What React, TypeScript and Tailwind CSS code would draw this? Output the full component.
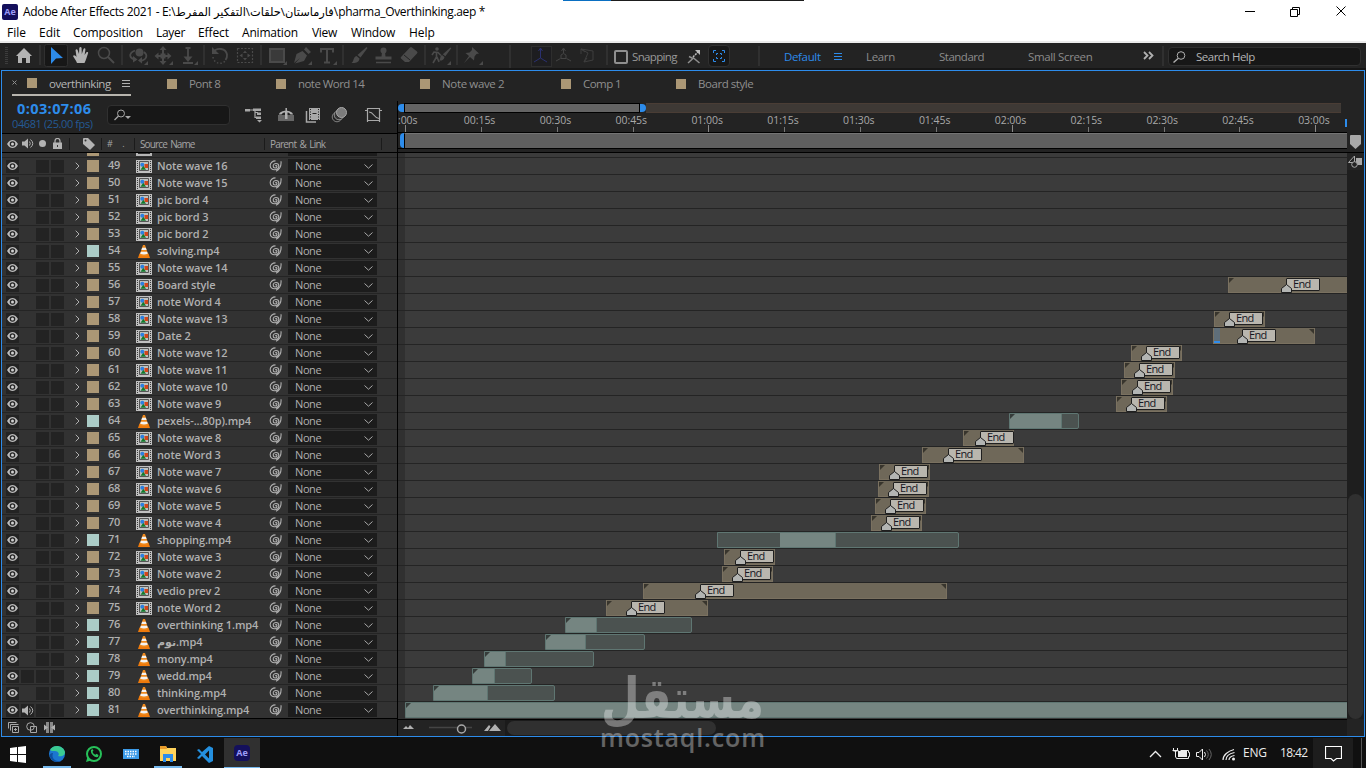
import type { ReactNode } from 'react'

type Kind = 'comp' | 'video'

interface Layer {
  n: number
  name: string
  kind: Kind
  bar?: { start: number; end: number; from?: number; to?: number; marker?: number; cache?: boolean }
  audio?: 'on' | 'off'
}

// bar positions are in panel pixels, as the ruler draws them
const LAYERS: Layer[] = [
  { n: 49, name: 'Note wave 16', kind: 'comp' },
  { n: 50, name: 'Note wave 15', kind: 'comp' },
  { n: 51, name: 'pic bord 4', kind: 'comp' },
  { n: 52, name: 'pic bord 3', kind: 'comp' },
  { n: 53, name: 'pic bord 2', kind: 'comp' },
  { n: 54, name: 'solving.mp4', kind: 'video' },
  { n: 55, name: 'Note wave 14', kind: 'comp' },
  { n: 56, name: 'Board style', kind: 'comp', bar: { start: 1228, end: 1360, marker: 1286 } },
  { n: 57, name: 'note Word 4', kind: 'comp' },
  { n: 58, name: 'Note wave 13', kind: 'comp', bar: { start: 1214, end: 1265, marker: 1229 } },
  { n: 59, name: 'Date 2', kind: 'comp', bar: { start: 1213, end: 1315, marker: 1242, cache: true } },
  { n: 60, name: 'Note wave 12', kind: 'comp', bar: { start: 1131, end: 1182, marker: 1146 } },
  { n: 61, name: 'Note wave 11', kind: 'comp', bar: { start: 1124, end: 1175, marker: 1139 } },
  { n: 62, name: 'Note wave 10', kind: 'comp', bar: { start: 1121, end: 1173, marker: 1137 } },
  { n: 63, name: 'Note wave 9', kind: 'comp', bar: { start: 1116, end: 1167, marker: 1131 } },
  { n: 64, name: 'pexels-...80p).mp4', kind: 'video', bar: { start: 1009, end: 1079, from: 1009, to: 1062 } },
  { n: 65, name: 'Note wave 8', kind: 'comp', bar: { start: 963, end: 1014, marker: 980 } },
  { n: 66, name: 'note Word 3', kind: 'comp', bar: { start: 922, end: 1024, marker: 948 } },
  { n: 67, name: 'Note wave 7', kind: 'comp', bar: { start: 879, end: 930, marker: 894 } },
  { n: 68, name: 'Note wave 6', kind: 'comp', bar: { start: 878, end: 929, marker: 893 } },
  { n: 69, name: 'Note wave 5', kind: 'comp', bar: { start: 875, end: 926, marker: 890 } },
  { n: 70, name: 'Note wave 4', kind: 'comp', bar: { start: 871, end: 922, marker: 886 } },
  { n: 71, name: 'shopping.mp4', kind: 'video', bar: { start: 717, end: 959, from: 779, to: 836 } },
  { n: 72, name: 'Note wave 3', kind: 'comp', bar: { start: 724, end: 775, marker: 740 } },
  { n: 73, name: 'Note wave 2', kind: 'comp', bar: { start: 722, end: 773, marker: 737 } },
  { n: 74, name: 'vedio prev 2', kind: 'comp', bar: { start: 643, end: 947, marker: 700 } },
  { n: 75, name: 'note Word 2', kind: 'comp', bar: { start: 606, end: 708, marker: 631 } },
  { n: 76, name: 'overthinking 1.mp4', kind: 'video', bar: { start: 565, end: 692, from: 565, to: 597 } },
  { n: 77, name: 'نوم.mp4', kind: 'video', bar: { start: 545, end: 645, from: 545, to: 586 } },
  { n: 78, name: 'mony.mp4', kind: 'video', bar: { start: 484, end: 594, from: 484, to: 506 } },
  { n: 79, name: 'wedd.mp4', kind: 'video', audio: 'off', bar: { start: 472, end: 532, from: 472, to: 495 } },
  { n: 80, name: 'thinking.mp4', kind: 'video', bar: { start: 433, end: 555, from: 433, to: 488 } },
  { n: 81, name: 'overthinking.mp4', kind: 'video', audio: 'on', bar: { start: 405, end: 1360, from: 405, to: 1360 } },
]

const TIMES = ['0:00s', '00:15s', '00:30s', '00:45s', '01:00s', '01:15s', '01:30s', '01:45s', '02:00s', '02:15s', '02:30s', '02:45s', '03:00s']
const TICK_GAP = 75.85
const TRACK_LEFT = 398

function Svg({ w, h, className = '', children }: { w: number; h: number; className?: string; children: ReactNode }) {
  return (
    <svg width={w} height={h} viewBox={`0 0 ${w} ${h}`} fill="none" className={`block shrink-0 ${className}`}>
      {children}
    </svg>
  )
}

function Eye() {
  return (
    <Svg w={11} h={8}>
      <path d="M0 4C2 .9 3.800 0 5.500 0S9 .9 11 4C9 7.100 7.200 8 5.500 8S2 7.100 0 4Z" fill="#bcbcbc" />
      <circle cx="5.500" cy="4" r="2.800" fill="#262626" />
      <circle cx="5.500" cy="4" r="1.500" fill="#d0d0d0" />
    </Svg>
  )
}

function Speaker() {
  return (
    <Svg w={12} h={11}>
      <path d="M0 3.500h2.500L6 .5v10L2.500 7.500H0z" fill="#b4b4b4" />
      <path d="M7.500 3.500q1.500 2 0 4M8.500 1.500q4.500 4 0 8" stroke="#b4b4b4" />
    </Svg>
  )
}

function Spiral() {
  return (
    <Svg w={13} h={12}>
      <path
        d="M6.300 6.200c.2-1.200 1.700-.8 1.600.4-.2 2-3.700 2.100-3.700-.6 0-3.300 5.600-3.400 5.600.2 0 4.800-8.300 4.900-8.600-.4C1 2.800 3.600 .9 6.500 .9M12 1.200c.4 4-.8 8-5 10"
        stroke="#b0b0b0"
        strokeWidth="1.100"
      />
    </Svg>
  )
}

function CompIcon() {
  return (
    <Svg w={16} h={13}>
      <path d="M0 0h16v13H0z" fill="#c0c0c0" />
      <path d="M1.500 1v12M14.500 1v12" stroke="#3a3a3a" strokeDasharray="1 1" />
      <path d="M3.500 1.500h9v9h-9z" stroke="#555" fill="#bcc0be" />
      <circle cx="6.300" cy="4.700" r="2" fill="#2d7fe0" />
      <path d="M8.500 4h3.500v4H8.500z" fill="#d2451b" />
      <path d="M4.500 9.700 7.300 5.700 10 9.700z" fill="#137a2c" />
    </Svg>
  )
}

function Cone() {
  return (
    <Svg w={12} h={13}>
      <path d="M1.500 8.500h9L12 13H0z" fill="#ee7a0c" />
      <path d="M5 0h2l3.300 10q-4.300 2-8.600 0z" fill="#f08a1d" />
      <path d="M4.100 2.800h3.800l.7 2.200H3.400zM2.800 6.800h6.400l.6 2q-3.800 1.200-7.600 0z" fill="#f2f2f2" />
    </Svg>
  )
}

function Chevron() {
  return (
    <Svg w={9} h={5}>
      <path d="m.5.5 4 3.700L8.500.5" stroke="#a8a8a8" />
    </Svg>
  )
}

function Cell({ dark, children }: { dark?: boolean; children?: ReactNode }) {
  return <div className={`mr-0.5 flex h-[13px] w-[13px] items-center justify-center ${dark ? 'bg-[#232323]' : ''}`}>{children}</div>
}

function LayerRow({ layer }: { layer: Layer }) {
  return (
    <div className="flex h-[17px] shrink-0 items-center border-t border-[#242424] bg-[#323232] pl-1 text-[11px] leading-none text-[#b0b0b0]">
      <Cell dark><Eye /></Cell>
      <Cell dark={!!layer.audio}>{layer.audio === 'on' && <Speaker />}</Cell>
      <Cell dark />
      <Cell dark />
      <div className="flex w-[21px] justify-center pl-px">
        <Svg w={5} h={8}>
          <path d="m.7.700 3.300 3.300-3.300 3.300" stroke="#b0b0b0" />
        </Svg>
      </div>
      <div className={`h-3 w-3 ${layer.kind === 'comp' ? 'bg-[#ab9775]' : 'bg-[#abccc7]'}`} />
      <span className="w-[37px] pb-[3px] pl-[9px] font-semibold tracking-[-0.2px]">{layer.n}</span>
      <div className="flex w-4 justify-center">{layer.kind === 'comp' ? <CompIcon /> : <Cone />}</div>
      <span className="w-[117px] whitespace-nowrap pb-0.5 pl-[5px] font-semibold tracking-[-0.12px]">{layer.name}</span>
      <Spiral />
      <div className="ml-[6px] flex h-[14px] w-[89px] items-center justify-between bg-[#1c1c1c] pl-[7px] pr-1">
        <span className="pb-0.5 font-medium tracking-[-0.4px]">None</span>
        <Chevron />
      </div>
    </div>
  )
}

function Marker({ at }: { at: number }) {
  return (
    <div className="absolute -left-px top-0 h-4">
      <span
        className="absolute top-px flex h-[13px] w-[34px] items-center rounded-[1px] border border-[#1f1f1f] bg-[#b9b6ae] pb-0.5 pl-1.5 text-[11px] leading-none tracking-[-0.7px] text-[#15151f]"
        style={{ left: at }}
      >
        End
      </span>
      <div className="absolute bottom-0" style={{ left: at - 5 }}>
        <Svg w={11} h={9}>
          <path d="M.5 8.500v-4l5-4 5 4v4z" fill="#b3b5b3" stroke="#1f1f1f" />
        </Svg>
      </div>
    </div>
  )
}

function Track({ layer }: { layer: Layer }) {
  const { bar } = layer
  return (
    <div className="relative flex h-[17px] shrink-0 border-t border-[#242424]">
      {bar && layer.kind === 'comp' && (
        <div
          className="relative h-4 shrink-0 border-x border-b border-[#7a7160] bg-[#6f6859]"
          style={{ marginLeft: bar.start - TRACK_LEFT, width: bar.end - bar.start }}
        >
          <i className="absolute left-0 top-px size-[5px] bg-[#38352d] [clip-path:polygon(0_0,100%_0,0_100%)]" />
          <i className="absolute right-0 top-px size-[5px] bg-[#38352d] [clip-path:polygon(0_0,100%_0,100%_100%)]" />
          {bar.cache && <i className="absolute bottom-0 left-0 h-[15px] w-1.5 border-b-2 border-[#2f8ded] bg-[#5f6e79]" />}
          {bar.marker && <Marker at={bar.marker - bar.start} />}
        </div>
      )}
      {bar && layer.kind === 'video' && (
        <div
          className="relative flex h-4 shrink-0 rounded-r-xs border border-[#5f7672] bg-[#4b5250]"
          style={{ marginLeft: bar.start - TRACK_LEFT, width: bar.end - bar.start }}
        >
          <div
            className="h-[14px] border-r border-[#5f7672] bg-[#758581]"
            style={{ marginLeft: (bar.from ?? 0) - bar.start, width: (bar.to ?? 0) - (bar.from ?? 0) - 1 }}
          />
          {bar.from === bar.start && (
            <i className="absolute left-0 top-0 size-[5px] bg-[#363c3a] [clip-path:polygon(0_0,100%_0,0_100%)]" />
          )}
        </div>
      )}
    </div>
  )
}

function Sep({ className = '' }: { className?: string }) {
  return <div className={`h-5 w-0.5 shrink-0 bg-[#303030] ${className}`} />
}

function Tools() {
  return (
    <Svg w={610} h={25}>
      <path d="M6.500 4v18" stroke="#3c3c3c" strokeWidth="3" strokeDasharray="1 1" />
      <path d="m16 13 8-8 8 8h-2v7h-4v-5h-4v5h-4v-7z" fill="#b3b3b3" />
      <path d="M40 2v20M122 2v20M204 2v20M261 2v20M343 2v20M425 2v20M457 2v20M607 2v20" stroke="#303030" strokeWidth="2" />
      <path d="M510 2v23" stroke="#303030" strokeWidth="2" />
      <rect x="44.500" y="1.500" width="23" height="22" rx="2" fill="#171717" stroke="#303030" />
      <path d="m51 4 12 11-7 .5L51 21z" fill="#2d8ceb" />
      <path d="M77 20c-1-3-3-5-4-7 1-1.500 2.500-.5 3.500 1L75.500 7c1-1.500 2-.8 2.300.5L79 11l.3-6c.5-1.500 2-1.500 2.300 0l.2 6 1.700-5c.8-1.200 2-.7 1.900.7L84.600 12l1.700-2.500c1-1 2.300-.2 1.700 1-1 2.500-2 7-3.500 9.500z" fill="#b3b3b3" />
      <circle cx="104" cy="10" r="5.500" stroke="#4a4a4a" strokeWidth="1.500" />
      <path d="m108 14 6 6" stroke="#4a4a4a" strokeWidth="2" />
      {/* orbit, pan and dolly cameras */}
      <circle cx="139.500" cy="9.500" r="4" fill="#4a4a4a" />
      <path d="M135 7.500c-7 3-6 8 1 9M144 9c4 3 3 8-4 9" stroke="#4a4a4a" strokeWidth="1.800" />
      <path d="m133 13 4.500 3.500-4.500 3zM142 14l-4 3.500 4 3z" fill="#4a4a4a" />
      <path d="M163 6v14M156 13h14" stroke="#4a4a4a" strokeWidth="2" />
      <path d="m163 3 3.500 4h-7zM163 22l3.500-4h-7zM154.500 13l4-3.500v7zM171.500 13l-4-3.500v7zM160.500 10.500h5v5h-5z" fill="#4a4a4a" />
      <path d="M188 4v12M183 20h10M185.500 5h5" stroke="#4a4a4a" strokeWidth="1.800" />
      <path d="m183.500 13.500 4.500 5.500 4.500-5.500z" fill="#4a4a4a" />
      <path d="M213 9.500c4-6 13-4 14 2 .2 2-.3 4-1.500 5.500" stroke="#4a4a4a" strokeWidth="1.800" />
      <path d="M212 4v7h7z" fill="#4a4a4a" />
      <path d="M213 14c1 7 9 8 12 4" stroke="#4a4a4a" strokeWidth="1.500" strokeDasharray="1.500 2" />
      <rect x="237.500" y="5.500" width="15" height="14" stroke="#4a4a4a" strokeDasharray="2 1.500" strokeWidth="1.200" />
      <path d="m245 7.500 2 2.500h-4zM245 17.500l2-2.500h-4zM239.500 12.500l3-2v4zM250.500 12.500l-3-2v4z" fill="#4a4a4a" />
      <path d="M270 6h14v13h-14z" fill="#3a3a3a" stroke="#4a4a4a" strokeWidth="2" />
      <path d="m294 20 2.500-9 6-3 4.500 4.500-3 5.500-9 2.500 5-5.500zM304 6.500l2-2.500 5 5-2.500 2z" fill="#4a4a4a" />
      <path d="M321 9.500V6h12v3.500M327 6v13M324 19.500h6" stroke="#4a4a4a" strokeWidth="2" />
      <path
        d="M148 22v-4l-4 4zM173 22v-4l-4 4zM198 22v-4l-4 4zM287 22v-4l-4 4zM312 22v-4l-4 4zM337 22v-4l-4 4zM451 22v-4l-4 4zM483 22v-4l-4 4z"
        fill="#4a4a4a"
      />
      {/* paint tools */}
      <path d="m366.500 4 1 1-7 9.500-3-2.500zM356.500 13l3 2.500c-.5 4-4 5-8 4.500 2.500-1.500 1.500-6 5-7z" fill="#4a4a4a" />
      <circle cx="383.500" cy="7.500" r="3" fill="#4a4a4a" />
      <path d="M382 9h3l.5 4.500h6v3h-16v-3h6z" fill="#4a4a4a" />
      <path d="M376 19.500h15" stroke="#4a4a4a" strokeWidth="1.500" />
      <path d="m401 14 9-9.500q1-1 2 0l5 4q1 1 0 2l-8 8.500h-4l-4-3.500q-.8-.8 0-1.500z" fill="#4a4a4a" />
      <path d="m404 12 6 5" stroke="#232323" />
      <circle cx="437" cy="6" r="1.800" fill="#4a4a4a" />
      <path d="m432 12 2-3 4 .5 3 3M436.500 9v5l-3.500 6M437 14l2 5" stroke="#4a4a4a" strokeWidth="1.600" />
      <path d="m450.500 4.500.8.800-6 8-2.500-2zM442 12l2.500 2c-.5 3-3 4-5.500 3.500 2-1.500.5-4.500 3-5.500z" fill="#4a4a4a" />
      <path d="m472 4 7 6.500-2.500.5-2 2.500-.5 4-4-3.500-6 6 5-7-3.500-3 4-.5 2.500-2.500z" fill="#4a4a4a" />
      {/* axis modes */}
      <rect x="531.500" y="3.500" width="20" height="20" fill="#1d1d20" stroke="#2e2e2e" />
      <path d="M540.500 5v10l-6.500 4M540.500 15l6.500 4M538.500 8l2-3 2 3" stroke="#2a3070" />
      <path d="M563.500 6v4M556 18l4.500-2.500M571 18l-4.500-2.500M561.500 8l2-3 2 3M561 12l2.500-1.500L566 12v3.500h-5z" stroke="#444" />
      <path d="m581 6 12 2v9l-9 2 4-9zM581 6v5M581 6l4 3M584 19l3-4" stroke="#3e3e3e" />
    </Svg>
  )
}

function Toolbar() {
  return (
    <div className="flex h-[25px] shrink-0 items-center bg-[#232323] text-[11.5px] tracking-[-0.35px] text-[#8c8c8c]">
      <Tools />
      <div className="ml-1 mt-0.5 size-3.5 rounded-[2px] border-2 border-[#8f8f8f]" />
      <span className="ml-1 mt-[3px] w-[46px] whitespace-nowrap tracking-[-0.65px] text-[#999]">Snapping</span>
      <Svg w={16} h={16} className="ml-2 mt-0.5">
        <path d="m2 14 5.500-5 6 5M3 7.500l4 2" stroke="#8f8f8f" strokeWidth="1.500" />
        <path d="m7 8 5-5" stroke="#bcbcbc" strokeWidth="1.500" strokeDasharray="2 1" />
        <path d="M9 1h5v5z" fill="#bcbcbc" />
      </Svg>
      <div className="ml-1.5 flex h-[22px] w-[22px] items-center justify-center rounded-sm border border-[#303030] bg-[#171717]">
        <Svg w={14} h={14}>
          <path
            d="M1.500 4V1.500H4M10 1.500h2.500V4M1.500 10v2.500H4M10 12.500h2.500V10M4.500 6V4.500H6M8 4.500h1.500V6M4.500 8v1.500H6M8 9.500h1.500V8"
            stroke="#2d8ceb"
          />
        </Svg>
      </div>
      <Sep className="ml-[28px]" />
      <span className="ml-6 mt-[3px] w-[50px] text-[#2d8ceb]">Default</span>
      <div className="mt-0.5 flex w-8 flex-col gap-[2px]">
        <i className="h-px w-2 bg-[#2d8ceb]" />
        <i className="h-px w-2 bg-[#2d8ceb]" />
        <i className="h-px w-2 bg-[#2d8ceb]" />
      </div>
      <span className="mt-[3px] w-[73px]">Learn</span>
      <span className="mt-[3px] w-[89px] tracking-[-0.5px]">Standard</span>
      <span className="mt-[3px] w-[115px]">Small Screen</span>
      <Svg w={11} h={9}>
        <path d="m1 1 3.500 3.500L1 8M6 1l3.500 3.500L6 8" stroke="#b0b0b0" strokeWidth="1.800" />
      </Svg>
      <Sep className="ml-2" />
      <div className="ml-1 mt-0.5 flex h-[19px] w-[193px] items-center rounded-sm border border-[#303030] bg-[#171717] pl-1">
        <Svg w={13} h={12}>
          <circle cx="8" cy="4.500" r="3.800" stroke="#b0b0b0" />
          <path d="m5 7.500-4.500 4" stroke="#b0b0b0" strokeWidth="1.400" />
        </Svg>
        <span className="pl-[10px] tracking-[-0.5px] text-[#b5b5b5]">Search Help</span>
      </div>
    </div>
  )
}

function Tab({ label, width }: { label: string; width: string }) {
  return (
    <div className={`flex h-full items-center pb-1 ${width}`}>
      <i className="mr-3 size-2.5 bg-[#ab9775]" />
      <span className="whitespace-nowrap">{label}</span>
    </div>
  )
}

function HeadRule() {
  return <i className="h-3 w-px bg-[#1b1b1b]" />
}

function LayerPanel() {
  return (
    <div className="flex w-[395px] shrink-0 flex-col">
      <div className="flex h-[33px] shrink-0 items-start border-b border-black">
        <div className="flex w-[105px] flex-col">
          <span className="pl-[15px] text-[14.5px] font-bold leading-[15px] tracking-[0.4px] text-[#2d8ceb]">0:03:07:06</span>
          <span className="whitespace-nowrap pl-2.5 text-[11px] leading-[15px] tracking-[-0.4px] text-[#245a94]">04681 (25.00 fps)</span>
        </div>
        <div className="mt-1 flex h-5 w-[123px] items-center rounded-sm border border-[#303030] bg-[#171717] pl-1.5">
          <Svg w={18} h={12}>
            <circle cx="7" cy="4.500" r="3.500" stroke="#a8a8a8" />
            <path d="m4.500 7-4 4" stroke="#a8a8a8" strokeWidth="1.300" />
            <path d="M11 7h6l-3 3z" fill="#a8a8a8" />
          </Svg>
        </div>
        <Svg w={165} h={30} className="-mt-px">
          <path d="M18 10h7M25 10v7.500h3M25 12.500h3" stroke="#a8a8a8" strokeWidth="1.200" />
          <path d="M15 9h5v2.500h-5zM23 8.500h8V11h-8zM27 12.500h4V15h-4zM26 16.500h5V19h-5zM27 20h5l-2.500 2.500z" fill="#a8a8a8" />
          <path d="M48 15h16v6H48z" fill="#666" />
          <path d="M49 14.500c1-5 13-5 14 0h-2.500c-1-1.500-2-2-3-2V19h-2.500v-6.500c-1.500 0-2.500.5-3.500 2z" fill="#b0b0b0" />
          <path d="M56.200 8v4" stroke="#b0b0b0" strokeWidth="1.500" />
          <path d="M76.500 11v11H86" stroke="#a8a8a8" strokeWidth="1.500" />
          <path d="M79 8h11v12H79z" fill="#a8a8a8" />
          <path d="M80.500 9v11M88.500 9v11" stroke="#232323" strokeDasharray="1 1.500" />
          <path d="M82.500 13.500h4" stroke="#232323" />
          <circle cx="107" cy="17" r="4.800" stroke="#808080" />
          <circle cx="109" cy="15" r="4.800" fill="#333" stroke="#909090" />
          <circle cx="111.500" cy="12.500" r="5" fill="#7c7c7c" stroke="#a8a8a8" />
          <path d="M137.500 8.500h12v12h-12zM135 10.500h2M150 10.500h2M139 12c5 0 5 6.500 10 6.500M137.500 20v2M149.500 20v2" stroke="#a8a8a8" strokeWidth="1.200" />
        </Svg>
      </div>
      <div className="flex h-[19px] shrink-0 items-center border-b border-black bg-[#303030] pl-[5px] pt-px text-[10.5px] tracking-[-0.6px] text-[#a5a5a5]">
        <div className="flex w-[62px] items-center gap-1">
          <Eye />
          <Speaker />
          <i className="mx-px size-[7px] rounded-full bg-[#b4b4b4]" />
          <Svg w={9} h={11} className="ml-0.5">
            <path d="M2 5V3q0-2.500 2.500-2.500T7 3v2" stroke="#b4b4b4" strokeWidth="1.200" />
            <path d="M0 4.500h9V11H0z" fill="#b4b4b4" />
            <path d="M4 7h1v2H4z" fill="#333" />
          </Svg>
        </div>
        <HeadRule />
        <Svg w={12} h={12} className="ml-[13px] mr-[6px]">
          <path d="M0 1q0-1 1-1h4l7 7-5 5-7-6z" fill="#b4b4b4" />
          <circle cx="2.500" cy="2.500" r="1" fill="#333" />
        </Svg>
        <HeadRule />
        <span className="ml-[5px] flex w-[27px] gap-2.5 text-[9px]">
          <span>#</span>
          <span>.</span>
        </span>
        <HeadRule />
        <span className="ml-[5px] w-[124px] pt-px text-[10px] tracking-[-0.87px] [word-spacing:1.500px]">Source Name</span>
        <HeadRule />
        <span className="ml-[5px] w-[111px] pt-px text-[10px] tracking-[-0.8px] [word-spacing:1.500px]">Parent &amp; Link</span>
        <HeadRule />
      </div>
      <div className="flex h-1 shrink-0 items-start bg-[#323232] pl-[85px]">
        <i className="h-[3px] w-3 bg-[#ab9775]" />
        <i className="ml-[37px] h-[3px] w-4 border-x-2 border-b-2 border-[#b5b5b5]" />
        <i className="ml-[136px] h-[3px] w-[89px] bg-[#1c1c1c]" />
      </div>
      {LAYERS.map((l) => (
        <LayerRow key={l.n} layer={l} />
      ))}
      <div className="flex flex-1 items-center border-t border-black">
        <Svg w={60} h={16}>
          <g stroke="#a8a8a8">
            <path d="M6.500 8.500v-6h8M8.500 10.500v-6h8" />
            <path d="M10.500 6.500h6v6h-6zM13.500 8v3M12 9.500h3" />
            <circle cx="28.500" cy="6.500" r="3.800" />
            <path d="M28.500 6.500h6v6h-6z" />
          </g>
          <path d="M44 2h3v11h-3zM48 2h3v11h-3z" fill="#8a8a8a" />
          <path d="m42 4.500 4 3-4 3zM53 4.500l-4 3 4 3z" fill="#b0b0b0" />
        </Svg>
      </div>
    </div>
  )
}

function TimelineHead() {
  return (
    <>
      <div className="flex h-[13px] shrink-0 items-start pt-0.5">
        <i className="mt-px h-2 w-1.5 rounded-l-full bg-[#2d8ceb]" />
        <i className="h-[10px] w-[236px] border border-black bg-[#646464]" />
        <i className="mt-px h-2 w-1.5 rounded-r-full bg-[#2d8ceb]" />
        <i className="h-[10px] w-[695px] border-y border-[#4a3d35] bg-[#3e3935]" />
      </div>
      <div className="relative flex h-[19px] shrink-0 border-b border-black text-[10.5px] tracking-[-0.05px] text-[#a8a8a8]">
        <div className="-ml-[10px] -mt-px flex">
          {TIMES.map((t, i) => (
            <div key={t} className={`w-[75.85px] shrink-0 leading-[15px] ${i === 0 ? 'pl-[4px]' : ''}`}>
              {t}
            </div>
          ))}
        </div>
        {TIMES.map((t, i) => (
          <i
            key={t}
            className={`absolute bottom-0 w-px ${i % 4 === 0 ? 'h-[7px] bg-[#8a8a8a]' : 'h-[5px] bg-[#777]'}`}
            style={{ left: 7 + i * TICK_GAP }}
          />
        ))}
        <i className="absolute bottom-[5px] right-0 h-2 w-0.5 bg-[#2d8ceb]" />
      </div>
      <div className="flex h-4 shrink-0 border-b border-black">
        <i className="ml-0.5 h-[15px] w-1 rounded-l-sm bg-[#2d8ceb]" />
        <i className="h-[15px] flex-1 border-l border-t border-l-black border-t-[#747474] bg-[#5f5f5f]" />
      </div>
      <div className="h-1 shrink-0 border-b border-black" />
    </>
  )
}

function Timeline() {
  return (
    <div className="flex w-[949px] shrink-0 flex-col overflow-hidden">
      <TimelineHead />
      <div className="flex h-[566px] flex-col bg-linear-to-r from-[#303030] from-[7px] to-[#3b3b3b] to-[7px]">
        <div className="h-1 shrink-0" />
        {LAYERS.map((l) => (
          <Track key={l.n} layer={l} />
        ))}
      </div>
      <div className="flex h-[17px] items-center border-t border-black bg-[#1b1b1b]">
        <Svg w={107} h={16} className="bg-[#232323]">
          <path d="m5 9 3-3 2 2 2-3 4 4z" fill="#b0b0b0" />
          <path d="M31 7.500h43" stroke="#444" strokeWidth="1.500" />
          <circle cx="63.500" cy="9" r="4" fill="#232323" stroke="#a8a8a8" strokeWidth="1.500" />
          <path d="m86 11 5-6 1.500 1.500L90 11zM91 11l6-7 6 7z" fill="#b0b0b0" />
        </Svg>
        <i className="ml-0.5 h-[14px] w-[209px] rounded-full bg-[#303030]" />
      </div>
    </div>
  )
}

function RulerSide() {
  return (
    <div className="flex w-[17px] shrink-0 flex-col">
      <div className="flex h-[52px] items-end justify-center border-b border-black pb-[3px]">
        <Svg w={11} h={14}>
          <path d="M0 1q0-1 1-1h9q1 0 1 1v8l-5.500 5L0 9z" fill="#a8a8a8" />
        </Svg>
      </div>
      <Svg w={17} h={17}>
        <path d="M9 5h6v7H9z" fill="#a8a8a8" />
        <path d="M1.500 9.500 7.500 3v6.500z" stroke="#a8a8a8" />
        <circle cx="7.500" cy="11.500" r="2.800" fill="#232323" stroke="#a8a8a8" />
      </Svg>
      <div className="flex flex-1 flex-col justify-end bg-[#1e1e1e]">
        <i className="mx-px h-[225px] rounded-full bg-[#303030]" />
      </div>
      <div className="h-[17px]" />
    </div>
  )
}

function Taskbar() {
  return (
    <div className="flex h-[31px] shrink-0 items-center bg-[#101010] text-[12px] text-[#ececec]">
      <Svg w={224} h={31}>
        <path d="m10 10 7-1v7h-7zM18 9l8-1v8h-8zM10 17h7v7l-7-1zM18 17h8v8l-8-1z" fill="#fff" />
        <circle cx="57" cy="16" r="8" fill="#1b76d0" />
        <path d="M50 12c3-6 13-5 15 2 0 4-4 5-7 4 2-2 0-5-3-5-3 0-4 0-5-1z" fill="#3bcb92" />
        <path d="M53 15c-2 5 2 9 8 8-3 2-9 1-11-4-1-3 1-4 3-4z" fill="#0e4f9f" />
        <path d="M43 28h28v3H43zM154 28h28v3h-28z" fill="#76b9ed" />
        <circle cx="94" cy="16" r="7" stroke="#27c15a" strokeWidth="2" />
        <path d="m86 24 1.500-5 3.500 3.500z" fill="#27c15a" />
        <path d="M91 12c-1 3 3 8 7 7l.5-2-2-1.200-1 1c-1.500-.5-2.500-1.500-3-3l1-1-1-1.800z" fill="#27c15a" />
        <path d="M123 11h16v10h-16z" fill="#3c9be8" />
        <path d="M125 13.500h12M125 16h12M127 18.500h8" stroke="#fff" strokeWidth="1.300" strokeDasharray="1.500 1" />
        <path d="M160 8h6l1 2h9v13h-16z" fill="#ffd35c" />
        <path d="M160 8h6l1 3h-7z" fill="#e89b2b" />
        <path d="M163 16h10v8h-3v-4h-4v4h-3z" fill="#2d8ceb" />
        <path
          d="m209 8 4 2v13l-4 2-7-7-3 3-2-1 4-4-4-4 2-1 3 3zM209 12.500 205 16.500l4 4z"
          fill="#2490df"
          fillRule="evenodd"
        />
      </Svg>
      <div className="flex h-full w-9 items-center justify-center border-b-2 border-[#76b9ed] bg-[#303030]">
        <span className="flex size-4 items-center justify-center rounded-sm bg-[#14105c] text-[9px] font-bold text-[#9c9cf8]">Ae</span>
      </div>
      <div className="flex-1" />
      <Svg w={98} h={31}>
        <path d="m6 19 5.500-5.500L17 19" stroke="#eee" strokeWidth="1.300" />
        <path d="M34 13h9v6h-9z" fill="#eee" />
        <path d="M32.500 19.500v1h12v-2h1v-4h-1v-2h-8M29.500 10v3h4v-3M28.500 12.500h6M31.500 13v6.500" stroke="#eee" />
        <path d="M52.500 14.500H55l3.500-3.500v11L55 18.500h-2.500z" stroke="#eee" />
        <path d="M60.500 14q2 2.500 0 5" stroke="#eee" />
        <path d="M62.500 12.500q3.500 4 0 8M65 11q4.500 5.500 0 11" stroke="#666" />
        <path d="M79 22c0-5 5-9 11-10.500M82 22c0-4 4-6.500 8.500-7.500M85 22c0-2.500 3-4 5.500-4.500" stroke="#eee" strokeWidth="1.200" />
        <circle cx="89.500" cy="21" r="1.500" fill="#eee" />
      </Svg>
      <span className="w-[38px] pb-0.5 pl-px tracking-[-0.2px]">ENG</span>
      <span className="w-8 whitespace-nowrap pb-0.5 tracking-[-0.65px]">18:42</span>
      <div className="flex h-full w-10 items-center justify-center bg-[#1d1d1d] ml-px">
        <Svg w={17} h={17}>
          <path d="M.5 1.500h16v12h-5L8.500 16 6 13.500H.5z" stroke="#fff" strokeWidth="1.200" />
        </Svg>
      </div>
      <div className="ml-2 mr-1 h-full w-px bg-[#555]" />
    </div>
  )
}

function MenuBar() {
  return (
    <div className="flex h-[43px] shrink-0 flex-col border-b-2 border-[#ebebeb] bg-white text-[12px] text-black">
      <div className="flex h-[23px] items-center pl-0.5">
        <span className="flex size-4 items-center justify-center rounded-xs bg-[#14105c] text-[9px] font-bold text-[#9c9cf8]">Ae</span>
        <span className="flex-1 whitespace-nowrap pl-[5px] pt-px tracking-[-0.33px]">
          Adobe After Effects 2021 - E:\
          <span className="text-[11.4px] tracking-normal">فارماستان\حلقات\التفكير المفرط</span>
          \pharma_Overthinking.aep *
        </span>
        <Svg w={121} h={21}>
          <path d="M0 10.500h10M45.500 8.500h7v7h-7zM47.500 8.500v-2h7v7h-2M91.500 5.500l9 9M100.500 5.500l-9 9" stroke="#000" />
        </Svg>
      </div>
      <div className="flex h-[18px] items-center pl-[7px] pt-0.5">
        <span className="w-8">File</span>
        <span className="w-[34px]">Edit</span>
        <span className="w-[83px] tracking-[-0.1px]">Composition</span>
        <span className="w-[42px] tracking-[-0.3px]">Layer</span>
        <span className="w-11 tracking-[-0.1px]">Effect</span>
        <span className="w-[70px] tracking-[-0.2px]">Animation</span>
        <span className="w-[39px] tracking-[-0.3px]">View</span>
        <span className="w-[58px] tracking-[-0.2px]">Window</span>
        <span>Help</span>
      </div>
    </div>
  )
}

export default function App() {
  return (
    <div className="relative flex h-[768px] w-[1366px] flex-col overflow-hidden bg-[#161616] font-['Open_Sans','DejaVu_Sans',sans-serif]">
      <MenuBar />
      <div className="absolute left-[563px] top-0 flex h-px">
        <i className="w-12 bg-[#0a6fc2]" />
        <i className="w-[193px] bg-[#1d1d1d]" />
      </div>
      <Toolbar />
      <div className="mx-px mt-0.5 flex h-[667px] shrink-0 flex-col border border-[#2d8ceb] bg-[#232323]">
        <div className="flex h-[30px] shrink-0 text-[11.5px] tracking-[-0.55px] text-[#8f8f8f]">
          <div className="ml-2.5 flex h-[25px] w-[119px] items-center border-b-2 border-[#b8b5ae] text-[#b5b5b5]">
            <Svg w={5} h={5}>
              <path d="m.5.500 4 4M4.500.500l-4 4" stroke="#8f8f8f" />
            </Svg>
            <i className="ml-2.5 size-2.5 bg-[#ab9775]" />
            <span className="ml-3 mt-0.5 w-[73px] tracking-[-0.45px]">overthinking</span>
            <div className="mt-0.5 flex flex-col gap-[2px]">
              <i className="h-px w-2 bg-[#b0b0b0]" />
              <i className="h-px w-2 bg-[#b0b0b0]" />
              <i className="h-px w-2 bg-[#b0b0b0]" />
            </div>
          </div>
          <div className="flex pl-9">
            <Tab label="Pont 8" width="w-[109px]" />
            <Tab label="note Word 14" width="w-[144px]" />
            <Tab label="Note wave 2" width="w-[141px] tracking-[-0.35px]" />
            <Tab label="Comp 1" width="w-[115px]" />
            <Tab label="Board style" width="w-[110px] tracking-[-0.45px]" />
          </div>
        </div>
        <div className="flex min-h-0 flex-1">
          <LayerPanel />
          <div className="w-px shrink-0 bg-black" />
          <Timeline />
          <RulerSide />
        </div>
      </div>
      <div className="h-px shrink-0 bg-[#101010]" />
      <Taskbar />
      <svg width="170" height="84" viewBox="0 0 170 84" className="absolute left-[598px] top-[672px] overflow-visible opacity-35" fill="#fff">
        <text x="3" y="46" textLength="163" lengthAdjust="spacingAndGlyphs" fontSize="56" fontWeight="700" fontFamily="DejaVu Sans" direction="rtl" textAnchor="end">
          مستقل
        </text>
        <text x="2" y="75" textLength="165" fontSize="25" fontWeight="600" fontFamily="Open Sans">
          mostaql.com
        </text>
      </svg>
    </div>
  )
}
